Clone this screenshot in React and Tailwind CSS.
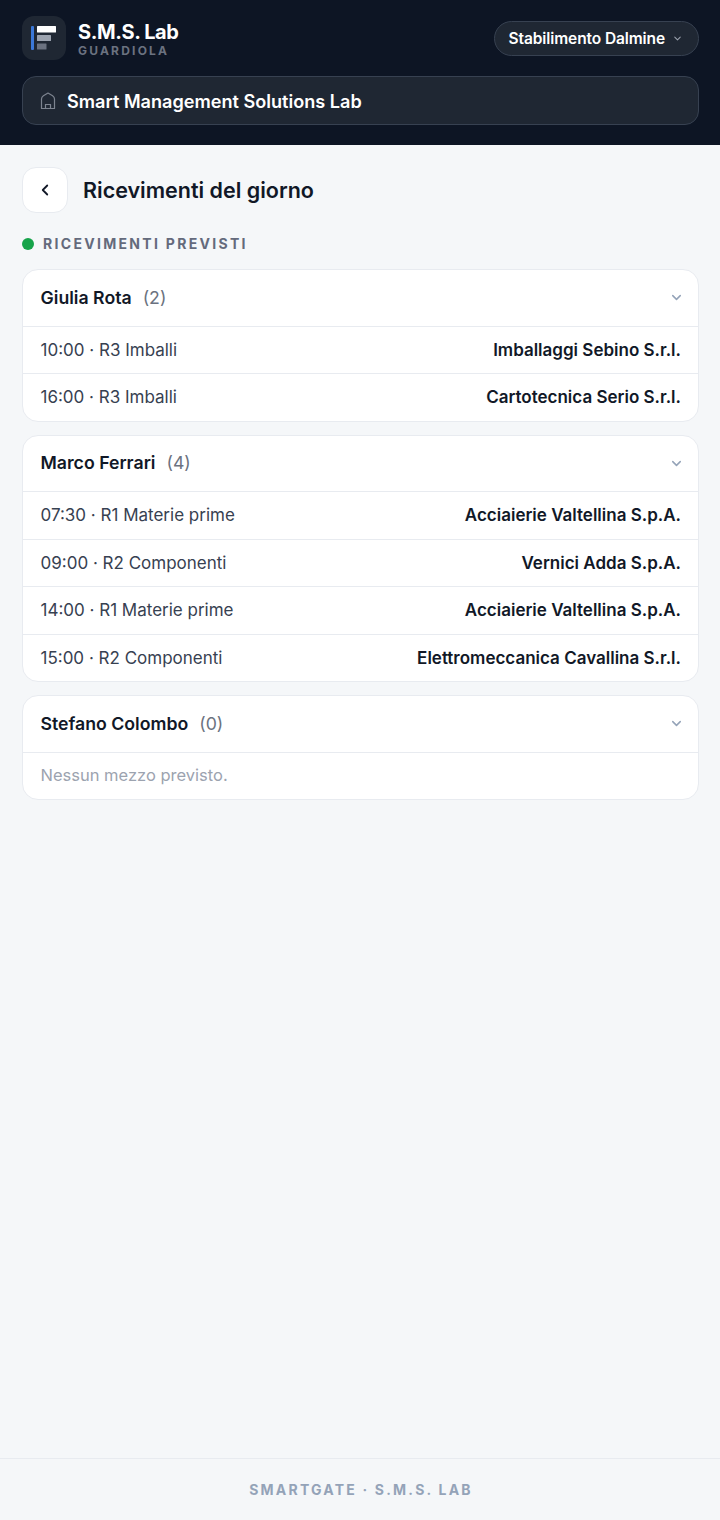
import React from 'react';
import { ChevronDown, ChevronLeft } from 'lucide-react';

const groups = [
  {
    name: 'Giulia Rota',
    count: 2,
    rows: [
      ['10:00 · R3 Imballi', 'Imballaggi Sebino S.r.l.'],
      ['16:00 · R3 Imballi', 'Cartotecnica Serio S.r.l.'],
    ],
  },
  {
    name: 'Marco Ferrari',
    count: 4,
    rows: [
      ['07:30 · R1 Materie prime', 'Acciaierie Valtellina S.p.A.'],
      ['09:00 · R2 Componenti', 'Vernici Adda S.p.A.'],
      ['14:00 · R1 Materie prime', 'Acciaierie Valtellina S.p.A.'],
      ['15:00 · R2 Componenti', 'Elettromeccanica Cavallina S.r.l.'],
    ],
  },
  { name: 'Stefano Colombo', count: 0, rows: [] },
];

const Logo = () => (
  <svg width="26" height="26" viewBox="0 0 26 26" fill="none">
    <rect x="0" y="1" width="3" height="24" rx="1" fill="#3b78d8" />
    <rect x="6" y="1" width="19" height="6.5" rx="0.5" fill="#ffffff" />
    <rect x="6" y="10" width="14" height="6" rx="0.5" fill="#9ca3af" />
    <rect x="6" y="18.5" width="9.5" height="6" rx="0.5" fill="#6b7280" />
  </svg>
);

const PlantIcon = () => (
  <svg width="16" height="18" viewBox="0 0 16 18" fill="none" stroke="#7d8490" strokeWidth="1.2">
    <path d="M1.5 16.5V7C1.5 5.5 2.2 4.6 3.4 3.8L8 1L12.6 3.8C13.8 4.6 14.5 5.5 14.5 7V16.5Z" strokeLinejoin="round" />
    <path d="M5.5 16.5V12.5H10.5V16.5" />
  </svg>
);

const Group = ({ group }) => (
  <div className="bg-white border border-[#e8ebf0] rounded-[16px] overflow-hidden">
    <div className="h-[55.5px] flex items-center justify-between pl-[17.5px] pr-[14px]">
      <div className="flex items-center gap-[11px] pt-[1px]">
        <span className="text-[17.7px] font-semibold text-[#111827]">{group.name}</span>
        <span className="text-[17.7px] text-[#6b7280]">({group.count})</span>
      </div>
      <ChevronDown size={15} strokeWidth={2.4} className="text-[#94a3b8]" />
    </div>
    {group.rows.length === 0 && (
      <div className="h-[47.5px] border-t border-[#e8ebf0] flex items-center pl-[17.5px] pr-[17px] text-[16.5px] text-[#9ca3af]">
        Nessun mezzo previsto.
      </div>
    )}
    {group.rows.map((row, i) => (
      <div key={i} className="h-[47.5px] border-t border-[#e8ebf0] flex items-center justify-between pl-[17.5px] pr-[17px] pt-[1px] text-[17px]">
        <span className="text-[#374151]">{row[0]}</span>
        <span className="font-semibold text-[#111827]">{row[1]}</span>
      </div>
    ))}
  </div>
);

export default function App() {
  return (
    <div className="min-h-[1520px] flex flex-col bg-[#f5f7f9] font-['Inter',sans-serif]">
      <header className="h-[145px] bg-[#0d1524] pl-[22px] pr-[21px] pt-[16px]">
        <div className="flex items-center justify-between">
          <div className="flex items-center gap-[12px]">
            <div className="w-[44px] h-[44px] rounded-[12px] bg-[#1f2733] flex items-center justify-center">
              <Logo />
            </div>
            <div>
              <div className="text-[20px] leading-[24px] font-bold text-white tracking-[-0.4px]">S.M.S. Lab</div>
              <div className="text-[12px] leading-[13px] font-bold text-[#6b7280] tracking-[2.2px]">GUARDIOLA</div>
            </div>
          </div>
          <div className="h-[35px] flex items-center gap-[7px] pl-[14px] pr-[15px] rounded-full bg-[#1f2733] border border-[#374151]">
            <span className="text-[15.5px] pt-[1px] font-semibold text-white tracking-[-0.1px]">Stabilimento Dalmine</span>
            <ChevronDown size={11} strokeWidth={2.2} className="text-[#9ca3af]" />
          </div>
        </div>
        <div className="mt-[16px] h-[49px] flex items-center gap-[11px] pl-[17px] pt-[1px] rounded-[14px] bg-[#1f2733] border border-[#374151]">
          <PlantIcon />
          <span className="text-[18.1px] pt-[1px] font-semibold text-white">Smart Management Solutions Lab</span>
        </div>
      </header>

      <main className="flex-1 pl-[22px] pr-[21px] pt-[22px]">
        <div className="flex items-center gap-[15px]">
          <button className="w-[46px] h-[46px] rounded-[14px] bg-white border border-[#e8ebf0] flex items-center justify-center">
            <ChevronLeft size={18} strokeWidth={2.4} className="text-[#111827]" />
          </button>
          <h1 className="text-[21.5px] pt-[1px] font-semibold text-[#111827]">Ricevimenti del giorno</h1>
        </div>

        <div className="mt-[21px] flex items-center gap-[9px]">
          <span className="w-[12px] h-[12px] rounded-full bg-[#16a34a]" />
          <span className="text-[14px] leading-[20px] font-bold text-[#646a7c] tracking-[2.3px]">RICEVIMENTI PREVISTI</span>
        </div>

        <div className="mt-[15px] flex flex-col gap-[13px]">
          {groups.map((g) => (
            <Group key={g.name} group={g} />
          ))}
        </div>
      </main>

      <footer className="h-[62px] border-t border-[#e8ebf0] flex items-center justify-center pl-[2px]">
        <span className="text-[14px] font-bold text-[#94a3b8] tracking-[2.2px]">SMARTGATE · S.M.S. LAB</span>
      </footer>
    </div>
  );
}
